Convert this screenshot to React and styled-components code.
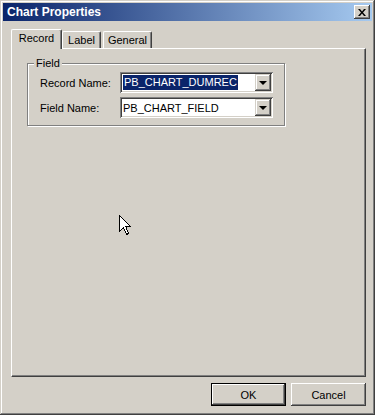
import React from "react";
import styled, { createGlobalStyle } from "styled-components";

const face = "#d4d0c8";

const GlobalStyle = createGlobalStyle`
  html, body {
    margin: 0;
    padding: 0;
    background: ${face};
  }
  body {
    font-family: "Liberation Sans", Arial, sans-serif;
    font-size: 11px;
    color: #000;
  }
`;

export default function App() {
  return (
    <>
      <GlobalStyle />
      <Window>
        <TitleBar>
          <Title>Chart Properties</Title>
          <CloseButton>
            <svg width="8" height="7" viewBox="0 0 8 7">
              <path
                d="M0 0h2l2 2.5L6 0h2L5 3.5 8 7H6L4 4.5 2 7H0l3-3.5z"
                fill="#000"
              />
            </svg>
          </CloseButton>
        </TitleBar>

        <Body>
          <TabStrip>
            <Tab $active $width={51}>Record</Tab>
            <Tab $width={39}>Label</Tab>
            <Tab $width={49} $gap={2}>General</Tab>
          </TabStrip>

          <Panel>
            <GroupBox>
              <GroupTitle>Field</GroupTitle>
              <FieldRow>
                <FieldLabel>Record Name:</FieldLabel>
                <Combo>
                  <ComboText>
                    <Selected>PB_CHART_DUMREC</Selected>
                  </ComboText>
                  <DropButton>
                    <Arrow />
                  </DropButton>
                </Combo>
              </FieldRow>
              <FieldRow>
                <FieldLabel>Field Name:</FieldLabel>
                <Combo>
                  <ComboText>PB_CHART_FIELD</ComboText>
                  <DropButton>
                    <Arrow />
                  </DropButton>
                </Combo>
              </FieldRow>
            </GroupBox>
          </Panel>

          <ButtonRow>
            <Button $default>OK</Button>
            <Button>Cancel</Button>
          </ButtonRow>
        </Body>

        <Cursor width="13" height="21" viewBox="0 0 13 21">
          <path
            d="M0.5 0.5V16.5L4.5 12.5L7.5 19.5L9.5 18.5L6.8 11.5H11.5Z"
            fill="#fff"
            stroke="#000"
            strokeWidth="1"
            shapeRendering="crispEdges"
          />
        </Cursor>
      </Window>
    </>
  );
}

const Window = styled.div`
  position: relative;
  width: 375px;
  height: 415px;
  box-sizing: border-box;
  padding: 3px;
  background: ${face};
  display: flex;
  flex-direction: column;
  box-shadow: inset -1px -1px #404040, inset 1px 1px ${face},
    inset -2px -2px #808080, inset 2px 2px #fff;
`;

const TitleBar = styled.div`
  height: 18px;
  flex: none;
  display: flex;
  align-items: center;
  justify-content: space-between;
  padding: 0 2px 0 4px;
  background: linear-gradient(to right, #0a246a, #a6caf0);
`;

const Title = styled.span`
  color: #fff;
  font-weight: bold;
  font-size: 12px;
  letter-spacing: 0;
`;

const CloseButton = styled.div`
  width: 16px;
  height: 14px;
  box-sizing: border-box;
  background: ${face};
  display: flex;
  align-items: center;
  justify-content: center;
  box-shadow: inset -1px -1px #404040, inset 1px 1px #fff,
    inset -2px -2px #808080, inset 2px 2px ${face};
`;

const Body = styled.div`
  flex: 1;
  display: flex;
  flex-direction: column;
  padding: 8px 6px 6px 8px;
`;

const TabStrip = styled.div`
  display: flex;
  align-items: flex-end;
  height: 19px;
  flex: none;
`;

const Tab = styled.div`
  position: relative;
  z-index: ${(p) => (p.$active ? 1 : 0)};
  width: ${(p) => p.$width}px;
  height: ${(p) => (p.$active ? 20 : 17)}px;
  margin-left: ${(p) => p.$gap || 0}px;
  margin-bottom: ${(p) => (p.$active ? -1 : 0)}px;
  box-sizing: border-box;
  background: ${face};
  border-top: 1px solid #fff;
  border-left: 1px solid #fff;
  border-right: 1px solid #404040;
  border-radius: 2px 2px 0 0;
  box-shadow: inset -1px 0 #808080;
  display: flex;
  align-items: ${(p) => (p.$active ? "flex-start" : "center")};
  padding-top: ${(p) => (p.$active ? 2 : 0)}px;
  justify-content: center;
  font-size: 11px;
`;

const Panel = styled.div`
  height: 329px;
  flex: none;
  box-sizing: border-box;
  padding: 14px 0 0 15px;
  border-top: 1px solid #fff;
  border-left: 1px solid #fff;
  border-right: 1px solid #404040;
  border-bottom: 1px solid #404040;
  box-shadow: inset -1px -1px #808080;
`;

const GroupBox = styled.div`
  position: relative;
  width: 258px;
  box-sizing: border-box;
  padding: 8px 11px 7px 12px;
  border: 1px solid #808080;
  box-shadow: 1px 1px #fff, inset 1px 1px #fff;
  display: flex;
  flex-direction: column;
  gap: 4px;
`;

const GroupTitle = styled.span`
  position: absolute;
  top: -7px;
  left: 6px;
  padding: 0 2px;
  background: ${face};
  line-height: 13px;
`;

const FieldRow = styled.div`
  display: flex;
  align-items: center;
`;

const FieldLabel = styled.span`
  width: 80px;
`;

const Combo = styled.div`
  width: 153px;
  height: 21px;
  box-sizing: border-box;
  padding: 2px;
  display: flex;
  background: #fff;
  box-shadow: inset 1px 1px #808080, inset -1px -1px #fff,
    inset 2px 2px #404040, inset -2px -2px ${face};
`;

const ComboText = styled.div`
  flex: 1;
  display: flex;
  align-items: center;
  padding-left: 1px;
  font-size: 11px;
`;

const Selected = styled.span`
  background: #0a246a;
  color: #fff;
  line-height: 15px;
  padding: 0 1px;
`;

const DropButton = styled.div`
  width: 16px;
  height: 17px;
  box-sizing: border-box;
  background: ${face};
  display: flex;
  align-items: center;
  justify-content: center;
  box-shadow: inset -1px -1px #404040, inset 1px 1px ${face},
    inset -2px -2px #808080, inset 2px 2px #fff;
`;

const Arrow = styled.span`
  width: 0;
  height: 0;
  border-left: 4px solid transparent;
  border-right: 4px solid transparent;
  border-top: 4px solid #000;
  margin-top: 1px;
`;

const ButtonRow = styled.div`
  display: flex;
  justify-content: flex-end;
  gap: 5px;
  margin-top: 6px;
  padding-right: 0;
`;

const Button = styled.div`
  width: 75px;
  height: 23px;
  box-sizing: border-box;
  display: flex;
  align-items: center;
  justify-content: center;
  background: ${face};
  font-size: 11px;
  box-shadow: ${(p) =>
    p.$default
      ? `inset 0 0 0 1px #000, inset -2px -2px #404040, inset 2px 2px #fff, inset -3px -3px #808080`
      : `inset -1px -1px #404040, inset 1px 1px #fff, inset -2px -2px #808080, inset 2px 2px ${face}`};
`;

const Cursor = styled.svg`
  position: absolute;
  left: 119px;
  top: 215px;
`;
